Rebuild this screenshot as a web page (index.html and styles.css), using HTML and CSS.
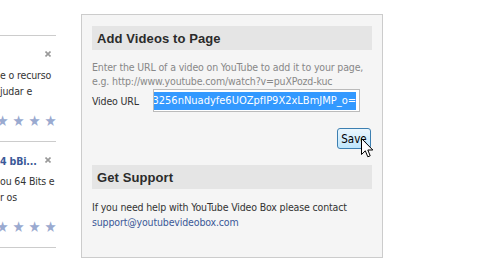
FILE: index.html
```html
<!DOCTYPE html>
<html lang="en">
<head>
    <meta charset="UTF-8">
    <title>YouTube Video Box</title>
    <link rel="stylesheet" href="styles.css">
</head>
<body>
    <div class="page">
        <div class="sidebar">
            <div class="story">
                <span class="story-title"></span>
                <span class="close"><svg width="6" height="6" viewBox="0 0 6 6"><path d="M0.5 0.5L5.5 5.5M5.5 0.5L0.5 5.5" stroke="#999" stroke-width="1.6"/></svg></span>
                <p class="story-text">e o recurso<br>judar e</p>
                <div class="stars"><span>&#9733;</span><span>&#9733;</span><span>&#9733;</span><span>&#9733;</span></div>
            </div>
            <div class="story">
                <a class="story-title" href="#">4 bBi...</a>
                <span class="close"><svg width="6" height="6" viewBox="0 0 6 6"><path d="M0.5 0.5L5.5 5.5M5.5 0.5L0.5 5.5" stroke="#999" stroke-width="1.6"/></svg></span>
                <p class="story-text">ou 64 Bits e<br>r os</p>
                <div class="stars"><span>&#9733;</span><span>&#9733;</span><span>&#9733;</span><span>&#9733;</span></div>
            </div>
        </div>

        <div class="panel">
            <h2 class="panel-title">Add Videos to Page</h2>
            <p class="hint">Enter the URL of a video on YouTube to add it to your page, e.g. http://www.youtube.com/watch?v=puXPozd-kuc</p>
            <div class="field">
                <label class="field-label">Video URL</label>
                <div class="url-input"><span class="selected">3256nNuadyfe6UOZpfIP9X2xLBmJMP_o=</span></div>
            </div>
            <div class="actions">
                <button class="save-btn">Save</button>
                <svg class="cursor" width="13" height="21" viewBox="0 0 13 21"><path d="M0.5 0.5V16.5L4.3 12.8L6.8 18.8L9.2 17.8L6.8 12H11.8Z" fill="#fff" stroke="#000" stroke-width="1"/></svg>
            </div>
            <h2 class="panel-title">Get Support</h2>
            <p class="support">If you need help with YouTube Video Box please contact <a href="#">support@youtubevideobox.com</a></p>
        </div>
    </div>
</body>
</html>
```

FILE: styles.css
```css
body {
    margin: 0;
    padding: 0;
    background-color: #fff;
    font-family: "DejaVu Sans Condensed", Tahoma, sans-serif;
    font-size: 10.5px;
    letter-spacing: -0.15px;
    color: #333;
}
.page {
    display: flex;
    align-items: flex-start;
}
.sidebar {
    width: 56px;
    margin-top: 35px;
    margin-right: 25px;
    overflow: hidden;
    border-top: 1px solid #ccc;
}
.story {
    position: relative;
    height: 106px;
    border-bottom: 1px solid #ccc;
    padding-top: 12px;
    box-sizing: border-box;
}
.close {
    position: absolute;
    top: 15px;
    left: 45px;
    line-height: 0;
}
.story-title {
    display: block;
    height: 14px;
    line-height: 14px;
    color: #3b5998;
    font-weight: bold;
    text-decoration: none;
    white-space: nowrap;
}
.story-text {
    margin: 6px 0 0;
    line-height: 15.5px;
    white-space: nowrap;
}
.stars {
    display: flex;
    margin: 15px 0 0 -5.5px;
    color: #9aaad0;
    font-size: 15px;
    line-height: 15px;
}
.stars span {
    width: 16px;
    flex: none;
    text-align: center;
}
.panel {
    width: 280px;
    margin-top: 14px;
    padding: 11px 10px 27px;
    background-color: #f5f5f5;
    border: 1px solid #ccc;
}
.panel-title {
    margin: 0;
    height: 24px;
    line-height: 25px;
    padding-left: 5px;
    background-color: #e5e5e5;
    font-family: "Liberation Sans", Arial, sans-serif;
    font-size: 13px;
    letter-spacing: 0.1px;
    color: #2b2b2b;
}
.hint {
    margin: 10px 0 0;
    line-height: 14px;
    color: #888;
}
.field {
    display: flex;
    align-items: center;
    margin-top: 1px;
}
.field-label {
    width: 61px;
}
.url-input {
    width: 199px;
    height: 21px;
    padding: 0 3px;
    border: 1px solid #bbb;
    background-color: #fff;
    display: flex;
    align-items: center;
    justify-content: flex-end;
    overflow: hidden;
    white-space: nowrap;
    font-size: 11px;
    letter-spacing: 0;
}
.selected {
    background-color: #3399ff;
    color: #fff;
    line-height: 18px;
}
.actions {
    position: relative;
    display: flex;
    justify-content: flex-end;
    margin: 16px 1px 16px 0;
}
.save-btn {
    height: 21px;
    width: 34px;
    padding: 0;
    border: 1px solid #3c7fb1;
    border-radius: 3px;
    background: linear-gradient(#eaf6fd, #bee6fd);
    font-family: "DejaVu Sans Condensed", Tahoma, sans-serif;
    font-size: 11.5px;
    color: #000;
}
.cursor {
    position: absolute;
    right: -3px;
    top: 10px;
}
.support {
    margin: 11px 0 0;
    line-height: 15px;
    color: #333;
}
.support a {
    color: #3b5998;
    text-decoration: none;
}
```
